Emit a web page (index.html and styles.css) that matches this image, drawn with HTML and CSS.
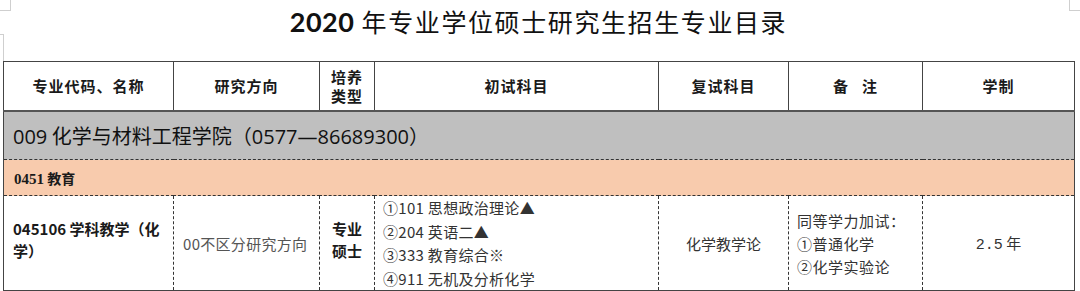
FILE: index.html
```html
<!DOCTYPE html>
<html lang="zh-CN">
<head>
<meta charset="utf-8">
<title>2020年专业学位硕士研究生招生专业目录</title>
<link rel="stylesheet" href="styles.css">
</head>
<body>
<div class="page">
  <span class="mark mark-tl"></span>
  <span class="mark mark-tl2"></span>
  <span class="mark mark-tr"></span>
  <h1 class="title"><span class="title-year">2020</span> 年专业学位硕士研究生招生专业目录</h1>
  <table class="catalog">
    <colgroup>
      <col class="c1"><col class="c2"><col class="c3"><col class="c4"><col class="c5"><col class="c6"><col class="c7">
    </colgroup>
    <tr class="head">
      <th>专业代码、名称</th>
      <th>研究方向</th>
      <th class="two">培养<br>类型</th>
      <th>初试科目</th>
      <th>复试科目</th>
      <th>备&nbsp;&nbsp;&nbsp;注</th>
      <th>学制</th>
    </tr>
    <tr class="school">
      <td colspan="7"><span class="num">009</span> 化学与材料工程学院（<span class="num">0577—86689300</span>）</td>
    </tr>
    <tr class="major">
      <td colspan="7"><span class="code">0451</span> 教育</td>
    </tr>
    <tr class="data">
      <td class="name">045106 学科教学（化<br>学）</td>
      <td class="dir">00不区分研究方向</td>
      <td class="type">专业<br>硕士</td>
      <td class="exam">①101 思想政治理论▲<br>②204 英语二▲<br>③333 教育综合※<br>④911 无机及分析化学</td>
      <td class="center">化学教学论</td>
      <td class="note">同等学力加试：<br>①普通化学<br>②化学实验论</td>
      <td class="center"><span class="mono">2.5</span> 年</td>
    </tr>
  </table>
</div>
</body>
</html>
```

FILE: styles.css
```css
html, body {
  margin: 0;
  padding: 0;
  background: #ffffff;
}

body {
  font-family: "Noto Sans CJK SC", "Noto Sans", sans-serif;
  color: #222;
}

.page {
  position: relative;
  width: 1080px;
  height: 291px;
  padding-left: 3px;
  box-sizing: border-box;
  overflow: hidden;
}

.mark {
  position: absolute;
  border-color: #cfcfcf;
  border-style: solid;
  border-width: 0;
}

.mark-tl {
  left: 0;
  top: 0;
  width: 10px;
  height: 10px;
  border-right-width: 1px;
  border-bottom-width: 1px;
}

.mark-tl2 {
  left: 0;
  top: 34px;
  width: 3px;
  height: 26px;
  border-top-width: 1px;
  border-right-width: 1px;
}

.mark-tr {
  right: 0;
  top: 0;
  width: 10px;
  height: 10px;
  border-left-width: 1px;
  border-bottom-width: 1px;
}

.title {
  width: 1071px;
  height: 61px;
  margin: 0;
  padding-top: 4px;
  box-sizing: border-box;
  text-align: center;
  font-size: 25px;
  font-weight: 400;
  line-height: 34px;
  color: #111;
  letter-spacing: 1.6px;
}

.title-year {
  font-family: "Lato", "Open Sans", sans-serif;
  font-weight: 700;
  font-size: 27px;
  letter-spacing: 0.5px;
}

.catalog {
  width: 1071px;
  table-layout: fixed;
  border-collapse: collapse;
  border: 1px solid #444;
}

.c1 { width: 170px; }
.c2 { width: 146px; }
.c3 { width: 55px; }
.c4 { width: 284px; }
.c5 { width: 130px; }
.c6 { width: 134px; }
.c7 { width: 152px; }

.catalog th,
.catalog td {
  padding: 0;
  box-sizing: border-box;
}

.head th {
  height: 49px;
  border: 1px solid #444;
  border-bottom: 2px solid #555;
  font-size: 15px;
  font-weight: 700;
  letter-spacing: 1px;
  color: #1a1a1a;
  text-align: center;
  vertical-align: middle;
  line-height: 19px;
}

.school td {
  height: 49px;
  background: #bfbfbf;
  border-left: 1px solid #444;
  border-right: 1px solid #444;
  border-bottom: 1px dashed #333;
  padding-left: 9px;
  font-size: 20px;
  color: #111;
  line-height: 26px;
  padding-top: 2px;
}

.school .num {
  font-family: "Open Sans", "Noto Sans", sans-serif;
  font-size: 20px;
}

.major td {
  height: 36px;
  background: #f8cbad;
  border-bottom: 1px dashed #333;
  padding-left: 10px;
  font-size: 14px;
  font-weight: 700;
  color: #1a1a1a;
}

.major .code {
  font-family: "Liberation Serif", serif;
  font-size: 15px;
}

.data td {
  height: 95px;
  border-left: 1px dashed #333;
  border-right: 1px dashed #333;
  border-bottom: 1px solid #444;
  font-size: 15px;
  color: #333;
  vertical-align: middle;
}

.data td:first-child {
  border-left: 1px solid #444;
}

.data td:last-child {
  border-right: 1px solid #444;
}

.data .name {
  padding: 0 4px 6px 9px;
  font-weight: 700;
  color: #1a1a1a;
  line-height: 22px;
  white-space: nowrap;
}

.data .dir {
  padding-left: 9px;
  color: #555;
  letter-spacing: 0.3px;
}

.data .type {
  text-align: center;
  font-weight: 700;
  color: #1a1a1a;
  line-height: 22px;
  padding-bottom: 6px;
}

.data .exam {
  padding-left: 8px;
  line-height: 23.5px;
  vertical-align: middle;
  letter-spacing: 0.3px;
}

.data .center {
  text-align: center;
}

.data .note {
  padding-left: 8px;
  line-height: 23px;
  letter-spacing: 0.5px;
}

.mono {
  font-family: "Liberation Mono", monospace;
  font-size: 15px;
}
```
